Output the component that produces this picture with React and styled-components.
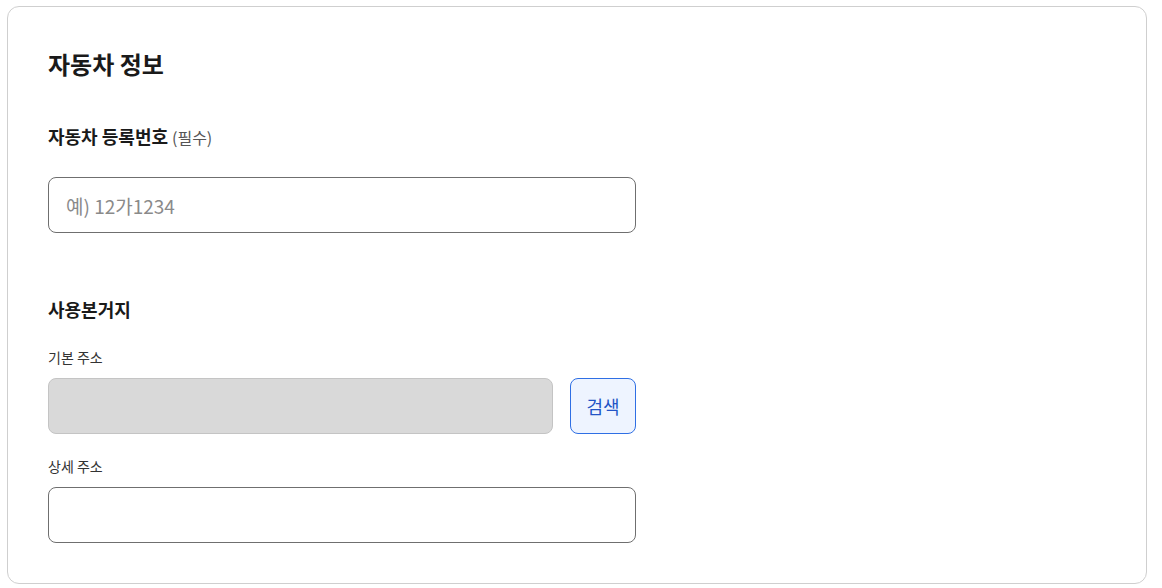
import React from "react";
import styled, { createGlobalStyle } from "styled-components";

const Global = createGlobalStyle`
  html, body { margin: 0; padding: 0; background: #fff; }
  body { font-family: "Noto Sans CJK KR", "Noto Sans", sans-serif; color: #1a1a1a; }
  * { box-sizing: border-box; }
`;

const Page = styled.div`
  padding: 6px 15px 4px 7px;
`;

const Card = styled.section`
  border: 1px solid #cfcfcf;
  border-radius: 12px;
  padding: 39px 40px 40px 40px;
  background: #fff;
`;

const Title = styled.h2`
  margin: 0;
  font-size: 24px;
  font-weight: 700;
  line-height: 36px;
  color: #1a1a1a;
`;

const Field = styled.div`
  width: 588px;
  display: flex;
  flex-direction: column;
  margin-top: ${(p) => p.$mt || 0}px;
`;

const FieldLabel = styled.div`
  font-size: 18px;
  font-weight: 700;
  line-height: 27px;
  color: #1a1a1a;
  margin-bottom: ${(p) => p.$mb ?? 0}px;
`;

const Required = styled.span`
  font-size: 16px;
  font-weight: 400;
  color: #555;
  margin-left: 4px;
`;

const SubLabel = styled.div`
  font-size: 14px;
  line-height: 20px;
  color: #333;
  margin-top: ${(p) => p.$mt || 0}px;
  margin-bottom: 11px;
`;

const Input = styled.input`
  width: 100%;
  height: 56px;
  border: 1px solid ${(p) => (p.disabled ? "#c4c4c4" : "#6f6f6f")};
  border-radius: 8px;
  background: ${(p) => (p.disabled ? "#d9d9d9" : "#fff")};
  padding: 0 17px;
  font-family: inherit;
  font-size: 19px;
  color: #1a1a1a;
  outline: none;
  &::placeholder { color: #8a8a8a; }
`;

const Row = styled.div`
  display: flex;
  gap: 17px;
`;

const SearchButton = styled.button`
  flex: 0 0 66px;
  height: 56px;
  border: 1px solid #2f6fe4;
  border-radius: 8px;
  background: #eef4ff;
  color: #2254c6;
  font-family: inherit;
  font-size: 18px;
  cursor: pointer;
  padding: 0;
`;

export default function App() {
  return (
    <>
      <Global />
      <Page>
        <Card>
          <Title>자동차 정보</Title>
          <Field $mt={41}>
            <FieldLabel $mb={26}>
              자동차 등록번호<Required>(필수)</Required>
            </FieldLabel>
            <Input placeholder="예) 12가1234" />
          </Field>
          <Field $mt={63}>
            <FieldLabel>사용본거지</FieldLabel>
            <SubLabel $mt={24}>기본 주소</SubLabel>
            <Row>
              <Input disabled />
              <SearchButton>검색</SearchButton>
            </Row>
            <SubLabel $mt={22}>상세 주소</SubLabel>
            <Input />
          </Field>
        </Card>
      </Page>
    </>
  );
}
